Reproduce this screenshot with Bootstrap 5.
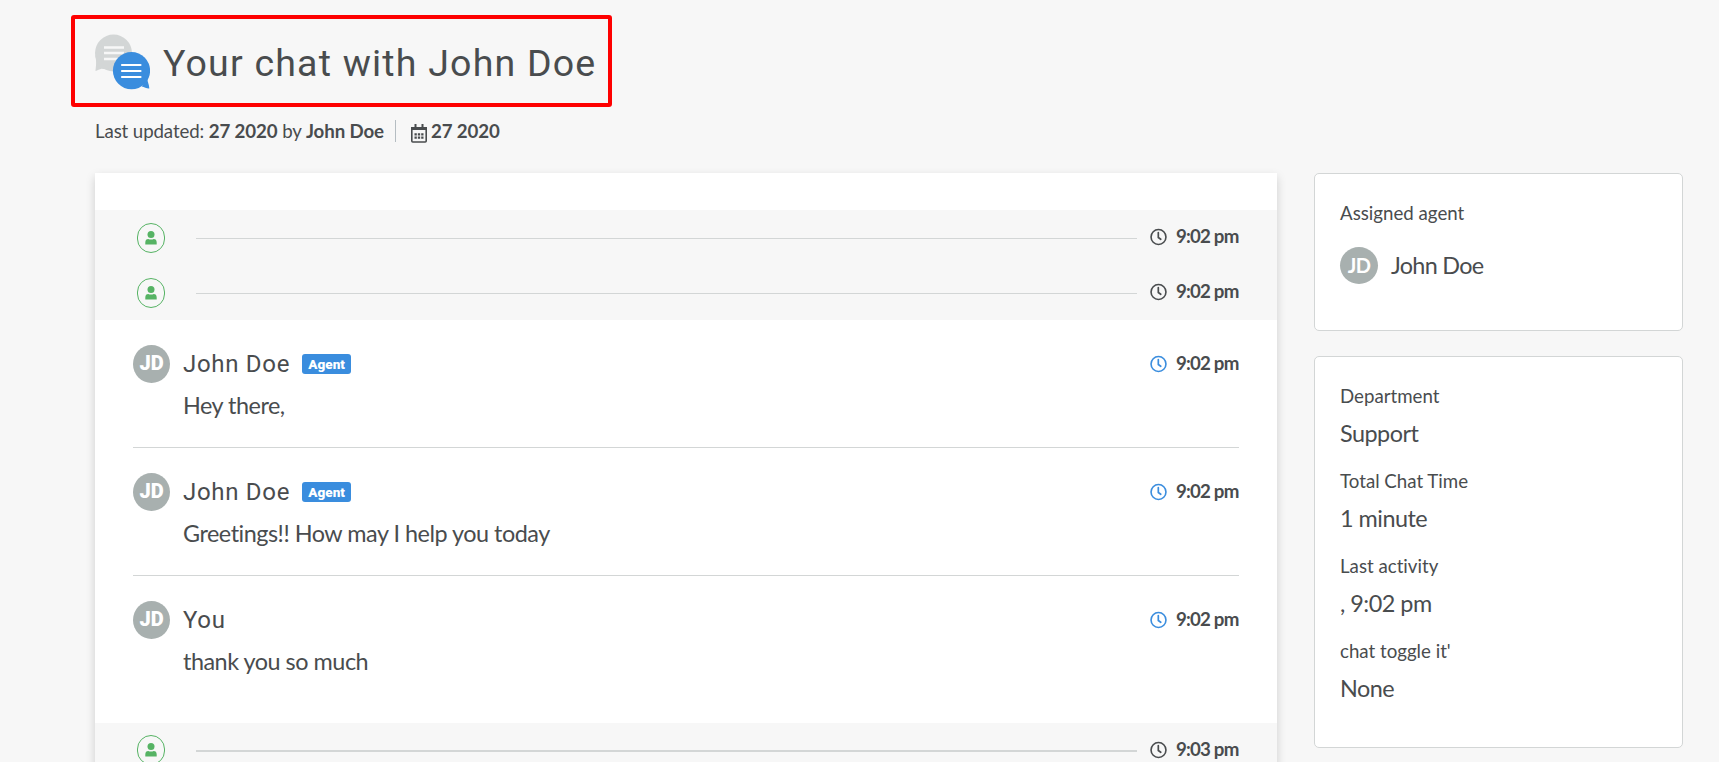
<!DOCTYPE html>
<html lang="en">
<head>
<meta charset="utf-8">
<title>Your chat with John Doe</title>
<link href="https://cdn.jsdelivr.net/npm/bootstrap@5.3.0/dist/css/bootstrap.min.css" rel="stylesheet">
<style>
body{background:#f7f7f7;color:#494c4e;font-family:Lato,"Liberation Sans",sans-serif;font-size:18.7px;font-variant-ligatures:none;overflow:hidden;height:762px}
.page{padding:15px 36px 0 95px}
.title-box{width:541px;height:92px;margin-left:-24px;border:4px solid #fe0000;border-radius:3px;padding:2px 0 0 20px}
.title-box h1{font:400 37.5px/44px Roboto,sans-serif;letter-spacing:1.2px;margin:1px 0 0 13px;white-space:nowrap}
.meta{height:30px;margin-top:9px;line-height:30px;white-space:nowrap;letter-spacing:-.12px}
.meta .rule{width:1px;height:22px;background:#b5bdc2;margin:0 15px 0 11px}
.columns{margin-top:27px}
.main-col{width:1182px}
.side-col{width:369px}
.transcript{height:620px;padding-top:37px;box-shadow:0 4px 9px rgba(0,0,0,.17)}
.event{height:55px;background:#f7f7f7;padding:0 38px 0 42px}
.event.thick{margin-top:19px}
.event .line{height:1px;background:#d3d6d6;margin:2px 13px 0 31px}
.event.thick .line{height:2px;margin-top:1px}
.person{width:28px;height:30px;border:1px solid #56b364;border-radius:14px}
.person svg{margin-right:1px}
.event .person{margin-top:1px}
.event.thick .person{margin-top:-1px}
.stamp{font-weight:700;font-size:18.7px;line-height:28px;gap:9px;white-space:nowrap;letter-spacing:-.8px}
.stamp .tm{width:63px;margin-top:-2px}
.event .stamp .tm{margin-top:-4px}
.stamp svg{margin-top:-1px}
.event .stamp svg{margin-top:-2px}
.msg{margin:0 38px;height:128px;padding-top:25px;border-bottom:1px solid #d3d6d6}
.msg:last-of-type{border-bottom:0}
.avatar{width:37px;height:38px;border-radius:50%;background:#a8b0af;color:#fff;font:900 20px/36px Roboto,sans-serif;text-align:center;flex:none}
.avatar.side{width:38px;height:37px;font:700 20px/36px Lato,sans-serif;letter-spacing:-.6px}
.who{font:400 24px/36px Roboto,sans-serif;letter-spacing:.7px;margin-left:13px}
.tag{background:#3a8dde;color:#fff;border-radius:3px;font:900 13.5px/20px Roboto,sans-serif;width:49px;height:20px;text-align:center;margin-left:12px}
.say{font-size:23.4px;line-height:36px;margin:4px 0 0 50px;letter-spacing:-.48px}
.panel{background:#fff;border:1px solid #d3d6d6;border-radius:5px;padding:24px 25px}
.panel.agent{height:158px}
.panel.facts{height:392px;margin-top:25px}
.panel .lab{line-height:30px}
.panel .val{font-size:23.4px;line-height:36px;margin:4px 0 15px;letter-spacing:-.5px}
.panel.agent .val{margin:-2px 0 0 13px;letter-spacing:-.7px}
.panel.agent .d-flex{margin-top:19px}
</style>
</head>
<body>
<svg width="0" height="0" class="position-absolute">
<symbol id="clock" viewBox="0 0 18 18"><circle cx="9" cy="9" r="7.9" fill="none" stroke="currentColor" stroke-width="1.7"/><path d="M8.8 4.300v5.200l2.600 1.900" fill="none" stroke="currentColor" stroke-width="1.800" stroke-linecap="round" stroke-linejoin="round"/></symbol>
<symbol id="user" viewBox="0 0 12 14"><circle cx="6" cy="3.600" r="3.500"/><path d="M.3 13.500v-2C.3 9 1.500 8 3.300 8 4.800 8.700 7.200 8.700 8.700 8c1.800 0 3 1 3 3.500v2z"/></symbol>
</svg>
<div class="page">
  <div class="title-box d-flex align-items-center">
    <svg width="55" height="56" viewBox="0 0 55 56"><g fill="#d3d6d6"><circle cx="18.500" cy="19" r="18.500"/><path d="M.3 21C1.800 29 .8 33 .5 37c2-.2 4-2 6-2.200l8 1z"/></g><path d="M9 13.500h20M9 19h20M9 25h20" stroke="#f7f7f7" stroke-width="2.300"/><g fill="#3a8dde"><circle cx="36.500" cy="36.700" r="18.600"/><path d="M52.500 43c-.8 4 1.800 7 1.800 11.500-2.500.2-5-1.500-7.500-2z"/></g><path d="M27 31h18.500M27 37h18.500M27 43h18.500" stroke="#fff" stroke-width="2.200" stroke-linecap="round"/></svg>
    <h1>Your chat with John Doe</h1>
  </div>
  <div class="meta d-flex align-items-center">
    <span>Last updated: <b>27 2020</b> by <b>John Doe</b></span><span class="rule"></span>
    <svg width="16" height="19" viewBox="0 0 16 19" class="mt-1 me-1"><path d="M.8 4.500h14.400V17a1 1 0 0 1-1 1H1.800a1 1 0 0 1-1-1z" fill="none" stroke="#494c4e" stroke-width="1.600"/><path d="M0 3h16v3H0zM3.500 0h2v4h-2zM10.500 0h2v4h-2z" fill="#494c4e"/><path d="M3.500 10.300h9M3.500 13.700h9" stroke="#494c4e" stroke-width="2.200" stroke-dasharray="2.300 1.050"/></svg>
    <b>27 2020</b>
  </div>
  <div class="columns d-flex justify-content-between align-items-start">
    <main class="main-col transcript bg-white">
      <div class="event d-flex align-items-center"><span class="person d-flex align-items-center justify-content-center"><svg width="12" height="14" fill="#56b364"><use href="#user"/></svg></span><span class="line flex-grow-1"></span><span class="stamp d-flex align-items-center"><svg width="17" height="18"><use href="#clock"/></svg><span class="tm">9:02 pm</span></span></div>
      <div class="event d-flex align-items-center"><span class="person d-flex align-items-center justify-content-center"><svg width="12" height="14" fill="#56b364"><use href="#user"/></svg></span><span class="line flex-grow-1"></span><span class="stamp d-flex align-items-center"><svg width="17" height="18"><use href="#clock"/></svg><span class="tm">9:02 pm</span></span></div>
      <section class="msg">
        <div class="d-flex align-items-center"><span class="avatar">JD</span><span class="who">John Doe</span><span class="tag">Agent</span><span class="stamp d-flex align-items-center ms-auto"><svg width="17" height="18" color="#3a8dde"><use href="#clock"/></svg><span class="tm">9:02 pm</span></span></div>
        <div class="say">Hey there,</div>
      </section>
      <section class="msg">
        <div class="d-flex align-items-center"><span class="avatar">JD</span><span class="who">John Doe</span><span class="tag">Agent</span><span class="stamp d-flex align-items-center ms-auto"><svg width="17" height="18" color="#3a8dde"><use href="#clock"/></svg><span class="tm">9:02 pm</span></span></div>
        <div class="say">Greetings!! How may I help you today</div>
      </section>
      <section class="msg">
        <div class="d-flex align-items-center"><span class="avatar">JD</span><span class="who">You</span><span class="stamp d-flex align-items-center ms-auto"><svg width="17" height="18" color="#3a8dde"><use href="#clock"/></svg><span class="tm">9:02 pm</span></span></div>
        <div class="say">thank you so much</div>
      </section>
      <div class="event thick d-flex align-items-center"><span class="person d-flex align-items-center justify-content-center"><svg width="12" height="14" fill="#56b364"><use href="#user"/></svg></span><span class="line flex-grow-1"></span><span class="stamp d-flex align-items-center"><svg width="17" height="18"><use href="#clock"/></svg><span class="tm">9:03 pm</span></span></div>
    </main>
    <aside class="side-col">
      <div class="panel agent">
        <div class="lab">Assigned agent</div>
        <div class="d-flex align-items-center"><span class="avatar side">JD</span><span class="val">John Doe</span></div>
      </div>
      <div class="panel facts">
        <div class="lab">Department</div><div class="val">Support</div>
        <div class="lab">Total Chat Time</div><div class="val">1 minute</div>
        <div class="lab">Last activity</div><div class="val">, 9:02 pm</div>
        <div class="lab">chat toggle it'</div><div class="val">None</div>
      </div>
    </aside>
  </div>
</div>
<script src="https://cdn.jsdelivr.net/npm/bootstrap@5.3.0/dist/js/bootstrap.bundle.min.js"></script>
</body>
</html>
